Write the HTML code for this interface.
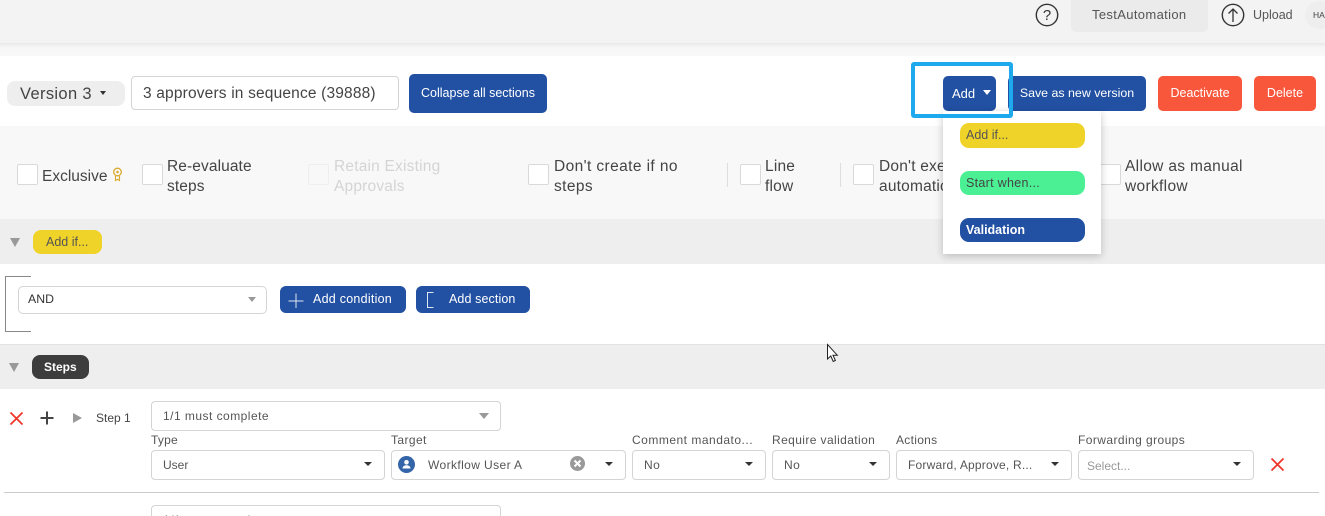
<!DOCTYPE html>
<html><head><meta charset="utf-8">
<style>
html,body{margin:0;padding:0;width:1325px;height:516px;overflow:hidden;background:#fff;}
body{position:relative;font-family:"Liberation Sans",sans-serif;color:#444;font-size:12.5px;}
.a{position:absolute;box-sizing:border-box;}
.t{position:absolute;white-space:nowrap;line-height:20px;}
.btn{position:absolute;box-sizing:border-box;background:#2251a3;color:#fff;border-radius:5px;text-align:center;white-space:nowrap;}
.red{background:#f9573b;}
.sel{position:absolute;box-sizing:border-box;background:#fff;border:1px solid #d4d4d4;border-radius:4px;}
.cb{position:absolute;box-sizing:border-box;width:21px;height:21px;background:#fff;border:1px solid #d9d9d9;border-radius:2px;}
.op{position:absolute;font-size:15.5px;line-height:20px;color:#444;white-space:nowrap;}
.car{position:absolute;width:0;height:0;border-left:4px solid transparent;border-right:4px solid transparent;border-top:4px solid #333;}
.carg{position:absolute;width:0;height:0;border-left:5px solid transparent;border-right:5px solid transparent;border-top:6px solid #999;}
.pill{position:absolute;box-sizing:border-box;border-radius:8px;padding-left:6px;white-space:nowrap;}
</style></head><body>
<!-- top bar -->
<div class="a" style="left:0;top:0;width:1325px;height:43px;background:#f3f3f3;"></div>
<div class="a" style="left:0;top:43px;width:1325px;height:13px;background:linear-gradient(#e9e9e9,#f6f6f6 35%,#f8f8f8)"></div>
<svg class="a" style="left:1035px;top:3px" width="24" height="24" viewBox="0 0 24 24"><circle cx="12" cy="12" r="10.7" fill="none" stroke="#333" stroke-width="1.4"/><text x="12" y="17" text-anchor="middle" font-family="Liberation Sans" font-size="15" fill="#333">?</text></svg>
<div class="a" style="left:1071px;top:0;width:137px;height:32px;background:#ebebeb;border-radius:0 0 5px 5px"></div>
<div class="t" style="left:1092px;top:5px;font-size:13px;letter-spacing:.35px;color:#555">TestAutomation</div>
<svg class="a" style="left:1221px;top:3px" width="24" height="24" viewBox="0 0 24 24"><circle cx="12" cy="12" r="10.7" fill="none" stroke="#333" stroke-width="1.4"/><path d="M12 19V6M7.500 10.500L12 6l4.500 4.500" fill="none" stroke="#333" stroke-width="1.300"/></svg>
<div class="t" style="left:1253px;top:5px;font-size:12.5px;color:#555">Upload</div>
<div class="a" style="left:1305px;top:1px;width:30px;height:28px;border-radius:50%;background:#eee"></div>
<div class="t" style="left:1313px;top:5px;font-size:8.500px;color:#444">HA</div>
<!-- header row -->
<div class="a" style="left:0;top:56px;width:1325px;height:70px;background:#fff"></div>
<div class="a" style="left:7px;top:81px;width:118px;height:25px;background:#eee;border-radius:8px"></div>
<div class="t" style="left:20px;top:84px;font-size:16.500px;letter-spacing:.35px;color:#444">Version 3</div>
<div class="car" style="left:100px;top:91px;border-left-width:3.500px;border-right-width:3.500px"></div>
<div class="sel" style="left:131px;top:76px;width:268px;height:34px"></div>
<div class="t" style="left:143px;top:84px;font-size:15.500px;letter-spacing:.17px;color:#444">3 approvers in sequence (39888)</div>
<div class="btn" style="left:409px;top:74px;width:138px;height:39px;line-height:39px;font-size:12.500px">Collapse all sections</div>
<div class="btn" style="left:943px;top:76px;width:53px;height:35px;line-height:35px;text-align:left;padding-left:9px;font-size:13px">Add</div>
<div class="car" style="left:983px;top:90px;border-top-color:#fff;border-left-width:4.500px;border-right-width:4.500px;border-top-width:5px"></div>
<div class="btn" style="left:1008px;top:76px;width:138px;height:35px;line-height:35px;font-size:12.400px">Save as new version</div>
<div class="btn red" style="left:1158px;top:76px;width:84px;height:35px;line-height:35px;font-size:12.500px">Deactivate</div>
<div class="btn red" style="left:1254px;top:76px;width:62px;height:35px;line-height:35px;font-size:12.500px">Delete</div>
<!-- options -->
<div class="a" style="left:0;top:126px;width:1325px;height:93px;background:#f8f8f8"></div>
<div class="cb" style="left:17px;top:164px"></div>
<div class="op" style="left:42px;top:167px">Exclusive</div>
<svg class="a" style="left:112px;top:167px" width="11" height="15" viewBox="0 0 11 15"><circle cx="5.500" cy="5" r="3.800" fill="none" stroke="#d9a92c" stroke-width="1.300"/><circle cx="5.500" cy="5" r="1.300" fill="#d9a92c"/><path d="M3.500 9v4.500l2-1.200 2 1.200V9" fill="none" stroke="#d9a92c" stroke-width="1.100"/></svg>
<div class="cb" style="left:142px;top:164px"></div>
<div class="op" style="left:167px;top:157px;letter-spacing:.1px">Re-evaluate<br>steps</div>
<div class="cb" style="left:308px;top:164px;background:#f8f8f8;border-color:#eee"></div>
<div class="op" style="left:334px;top:157px;letter-spacing:.2px;color:#d4d4d4">Retain Existing<br>Approvals</div>
<div class="cb" style="left:528px;top:164px"></div>
<div class="op" style="left:554px;top:157px;letter-spacing:.4px">Don't create if no<br>steps</div>
<div class="a" style="left:727px;top:163px;width:1px;height:24px;background:#ddd"></div>
<div class="cb" style="left:740px;top:164px"></div>
<div class="op" style="left:765px;top:157px;letter-spacing:.2px">Line<br>flow</div>
<div class="a" style="left:840px;top:163px;width:1px;height:24px;background:#ddd"></div>
<div class="cb" style="left:853px;top:164px"></div>
<div class="op" style="left:879px;top:157px;letter-spacing:.2px">Don't execute<br>automatic</div>
<div class="cb" style="left:1100px;top:164px"></div>
<div class="op" style="left:1125px;top:157px;letter-spacing:.33px">Allow as manual<br>workflow</div>
<!-- add if band -->
<div class="a" style="left:0;top:219px;width:1325px;height:45px;background:#eee"></div>
<div class="a" style="left:10px;top:238px;width:0;height:0;border-left:5.500px solid transparent;border-right:5.500px solid transparent;border-top:9px solid #999"></div>
<div class="pill" style="left:33px;top:230px;width:69px;height:24px;background:#f0d328;line-height:24px;padding-left:13px;font-size:12.500px;color:#555">Add if...</div>
<!-- condition -->
<div class="a" style="left:5px;top:276px;width:26px;height:56px;border:1px solid #888;border-right:0"></div>
<div class="sel" style="left:18px;top:286px;width:249px;height:28px;border-radius:5px"></div>
<div class="t" style="left:28px;top:289px;font-size:12.300px;color:#333">AND</div>
<div class="carg" style="left:248px;top:297px;border-left-width:4px;border-right-width:4px;border-top-width:5px"></div>
<div class="btn" style="left:280px;top:286px;width:126px;height:27px;line-height:26px;border-radius:6px;text-align:left;padding-left:33px;font-size:12.500px;letter-spacing:.25px">Add condition</div>
<svg class="a" style="left:287px;top:292px" width="18" height="18" viewBox="0 0 18 18"><path d="M9 1.500v14.500M1.500 9h15" stroke="#dfe6f3" stroke-width="1" fill="none"/></svg>
<div class="btn" style="left:416px;top:286px;width:114px;height:27px;line-height:26px;border-radius:6px;text-align:left;padding-left:33px;font-size:12.500px;letter-spacing:.1px">Add section</div>
<svg class="a" style="left:424px;top:290px" width="14" height="20" viewBox="0 0 14 20"><path d="M9.500 2.500H3.500v15h6" stroke="#dfe6f3" stroke-width="1" fill="none"/></svg>
<div class="a" style="left:0;top:344px;width:1325px;height:1px;background:#e2e2e2"></div>
<!-- steps band -->
<div class="a" style="left:0;top:345px;width:1325px;height:44px;background:#eee"></div>
<div class="a" style="left:9px;top:363px;width:0;height:0;border-left:5.500px solid transparent;border-right:5.500px solid transparent;border-top:9px solid #999"></div>
<div class="pill" style="left:32px;top:355px;width:57px;height:24px;background:#3d3d3d;color:#fff;font-weight:bold;line-height:24px;padding-left:12px;font-size:12px">Steps</div>
<!-- step row -->
<svg class="a" style="left:8px;top:410px" width="17" height="17" viewBox="0 0 17 17"><path d="M2.500 2.500l12 12M14.500 2.500l-12 12" stroke="#f0362b" stroke-width="1.800" fill="none"/></svg>
<svg class="a" style="left:39px;top:410px" width="16" height="16" viewBox="0 0 16 16"><path d="M8 1.500v13M1.500 8h13" stroke="#444" stroke-width="2" fill="none"/></svg>
<div class="a" style="left:73px;top:413px;width:0;height:0;border-top:5.500px solid transparent;border-bottom:5.500px solid transparent;border-left:9px solid #999"></div>
<div class="t" style="left:96px;top:408px;font-size:12px;color:#444">Step 1</div>
<div class="sel" style="left:151px;top:401px;width:350px;height:30px"></div>
<div class="t" style="left:163px;top:406px;font-size:12px;letter-spacing:.47px;color:#555">1/1 must complete</div>
<div class="carg" style="left:479px;top:413px"></div>
<div class="t" style="left:151px;top:430px;font-size:12px;letter-spacing:.2px;color:#555">Type</div>
<div class="t" style="left:391px;top:430px;font-size:12px;letter-spacing:.4px;color:#555">Target</div>
<div class="t" style="left:632px;top:430px;font-size:12px;letter-spacing:.5px;color:#555">Comment mandato...</div>
<div class="t" style="left:772px;top:430px;font-size:12px;letter-spacing:.4px;color:#555">Require validation</div>
<div class="t" style="left:896px;top:430px;font-size:12px;letter-spacing:.3px;color:#555">Actions</div>
<div class="t" style="left:1078px;top:430px;font-size:12px;letter-spacing:.42px;color:#555">Forwarding groups</div>
<div class="sel" style="left:151px;top:450px;width:234px;height:30px"></div>
<div class="t" style="left:163px;top:455px;font-size:12px;color:#555">User</div>
<div class="car" style="left:364px;top:462px"></div>
<div class="sel" style="left:391px;top:450px;width:235px;height:30px"></div>
<svg class="a" style="left:398px;top:456px" width="17" height="17" viewBox="0 0 17 17"><circle cx="8.500" cy="8.500" r="8.500" fill="#3465a8"/><circle cx="8.500" cy="6.300" r="2.300" fill="#fff"/><path d="M4.500 12.500c0-2.200 1.800-3.300 4-3.300s4 1.100 4 3.300z" fill="#fff"/></svg>
<div class="t" style="left:428px;top:455px;font-size:12px;letter-spacing:.4px;color:#555">Workflow User A</div>
<svg class="a" style="left:570px;top:456px" width="15" height="15" viewBox="0 0 15 15"><circle cx="7.500" cy="7.500" r="7.500" fill="#999"/><path d="M4.500 4.500l6 6M10.500 4.500l-6 6" stroke="#fff" stroke-width="2" fill="none"/></svg>
<div class="car" style="left:605px;top:462px"></div>
<div class="sel" style="left:632px;top:450px;width:134px;height:30px"></div>
<div class="t" style="left:644px;top:455px;font-size:12px;letter-spacing:.4px;color:#555">No</div>
<div class="car" style="left:745px;top:462px"></div>
<div class="sel" style="left:772px;top:450px;width:118px;height:30px"></div>
<div class="t" style="left:784px;top:455px;font-size:12px;letter-spacing:.4px;color:#555">No</div>
<div class="car" style="left:869px;top:462px"></div>
<div class="sel" style="left:896px;top:450px;width:176px;height:30px"></div>
<div class="t" style="left:908px;top:455px;font-size:12px;letter-spacing:.2px;color:#555">Forward, Approve, R...</div>
<div class="car" style="left:1051px;top:462px"></div>
<div class="sel" style="left:1078px;top:450px;width:176px;height:30px"></div>
<div class="t" style="left:1087px;top:456px;font-size:12px;color:#999">Select...</div>
<div class="car" style="left:1233px;top:462px"></div>
<svg class="a" style="left:1269px;top:456px" width="17" height="17" viewBox="0 0 17 17"><path d="M2.500 2.500l12 12M14.500 2.500l-12 12" stroke="#f0362b" stroke-width="1.800" fill="none"/></svg>
<div class="a" style="left:4px;top:492px;width:1315px;height:1px;background:#ccc"></div>
<div class="sel" style="left:151px;top:505px;width:350px;height:30px"></div>
<div class="t" style="left:163px;top:510px;font-size:12px;letter-spacing:.47px;color:#555">1/1 must complete</div>
<!-- dropdown -->
<div class="a" style="left:943px;top:111px;width:158px;height:143px;background:#fff;box-shadow:0 2px 8px rgba(0,0,0,.22)"></div>
<div class="pill" style="left:960px;top:123px;width:125px;height:25px;background:#f0d328;line-height:24px;font-size:12.500px;color:#555;border-radius:9px">Add if...</div>
<div class="pill" style="left:960px;top:171px;width:125px;height:24px;background:#4bf095;line-height:24px;font-size:12.500px;letter-spacing:.3px;color:#444;border-radius:9px">Start when...</div>
<div class="pill" style="left:960px;top:218px;width:125px;height:24px;background:#2251a3;line-height:24px;font-size:12.500px;font-weight:bold;color:#fff;border-radius:9px">Validation</div>
<!-- highlight -->
<div class="a" style="left:911px;top:62px;width:102px;height:56px;border:4px solid #1ea9ee;border-radius:3px"></div>
<!-- cursor -->
<svg class="a" style="left:826px;top:343px" width="14" height="21" viewBox="0 0 14 21"><path d="M1.500 1.500v14.500l3.300-3 2.400 5.500 2.200-1-2.400-5.300h4.300z" fill="#fff" stroke="#222" stroke-width="1"/></svg>
</body></html>
